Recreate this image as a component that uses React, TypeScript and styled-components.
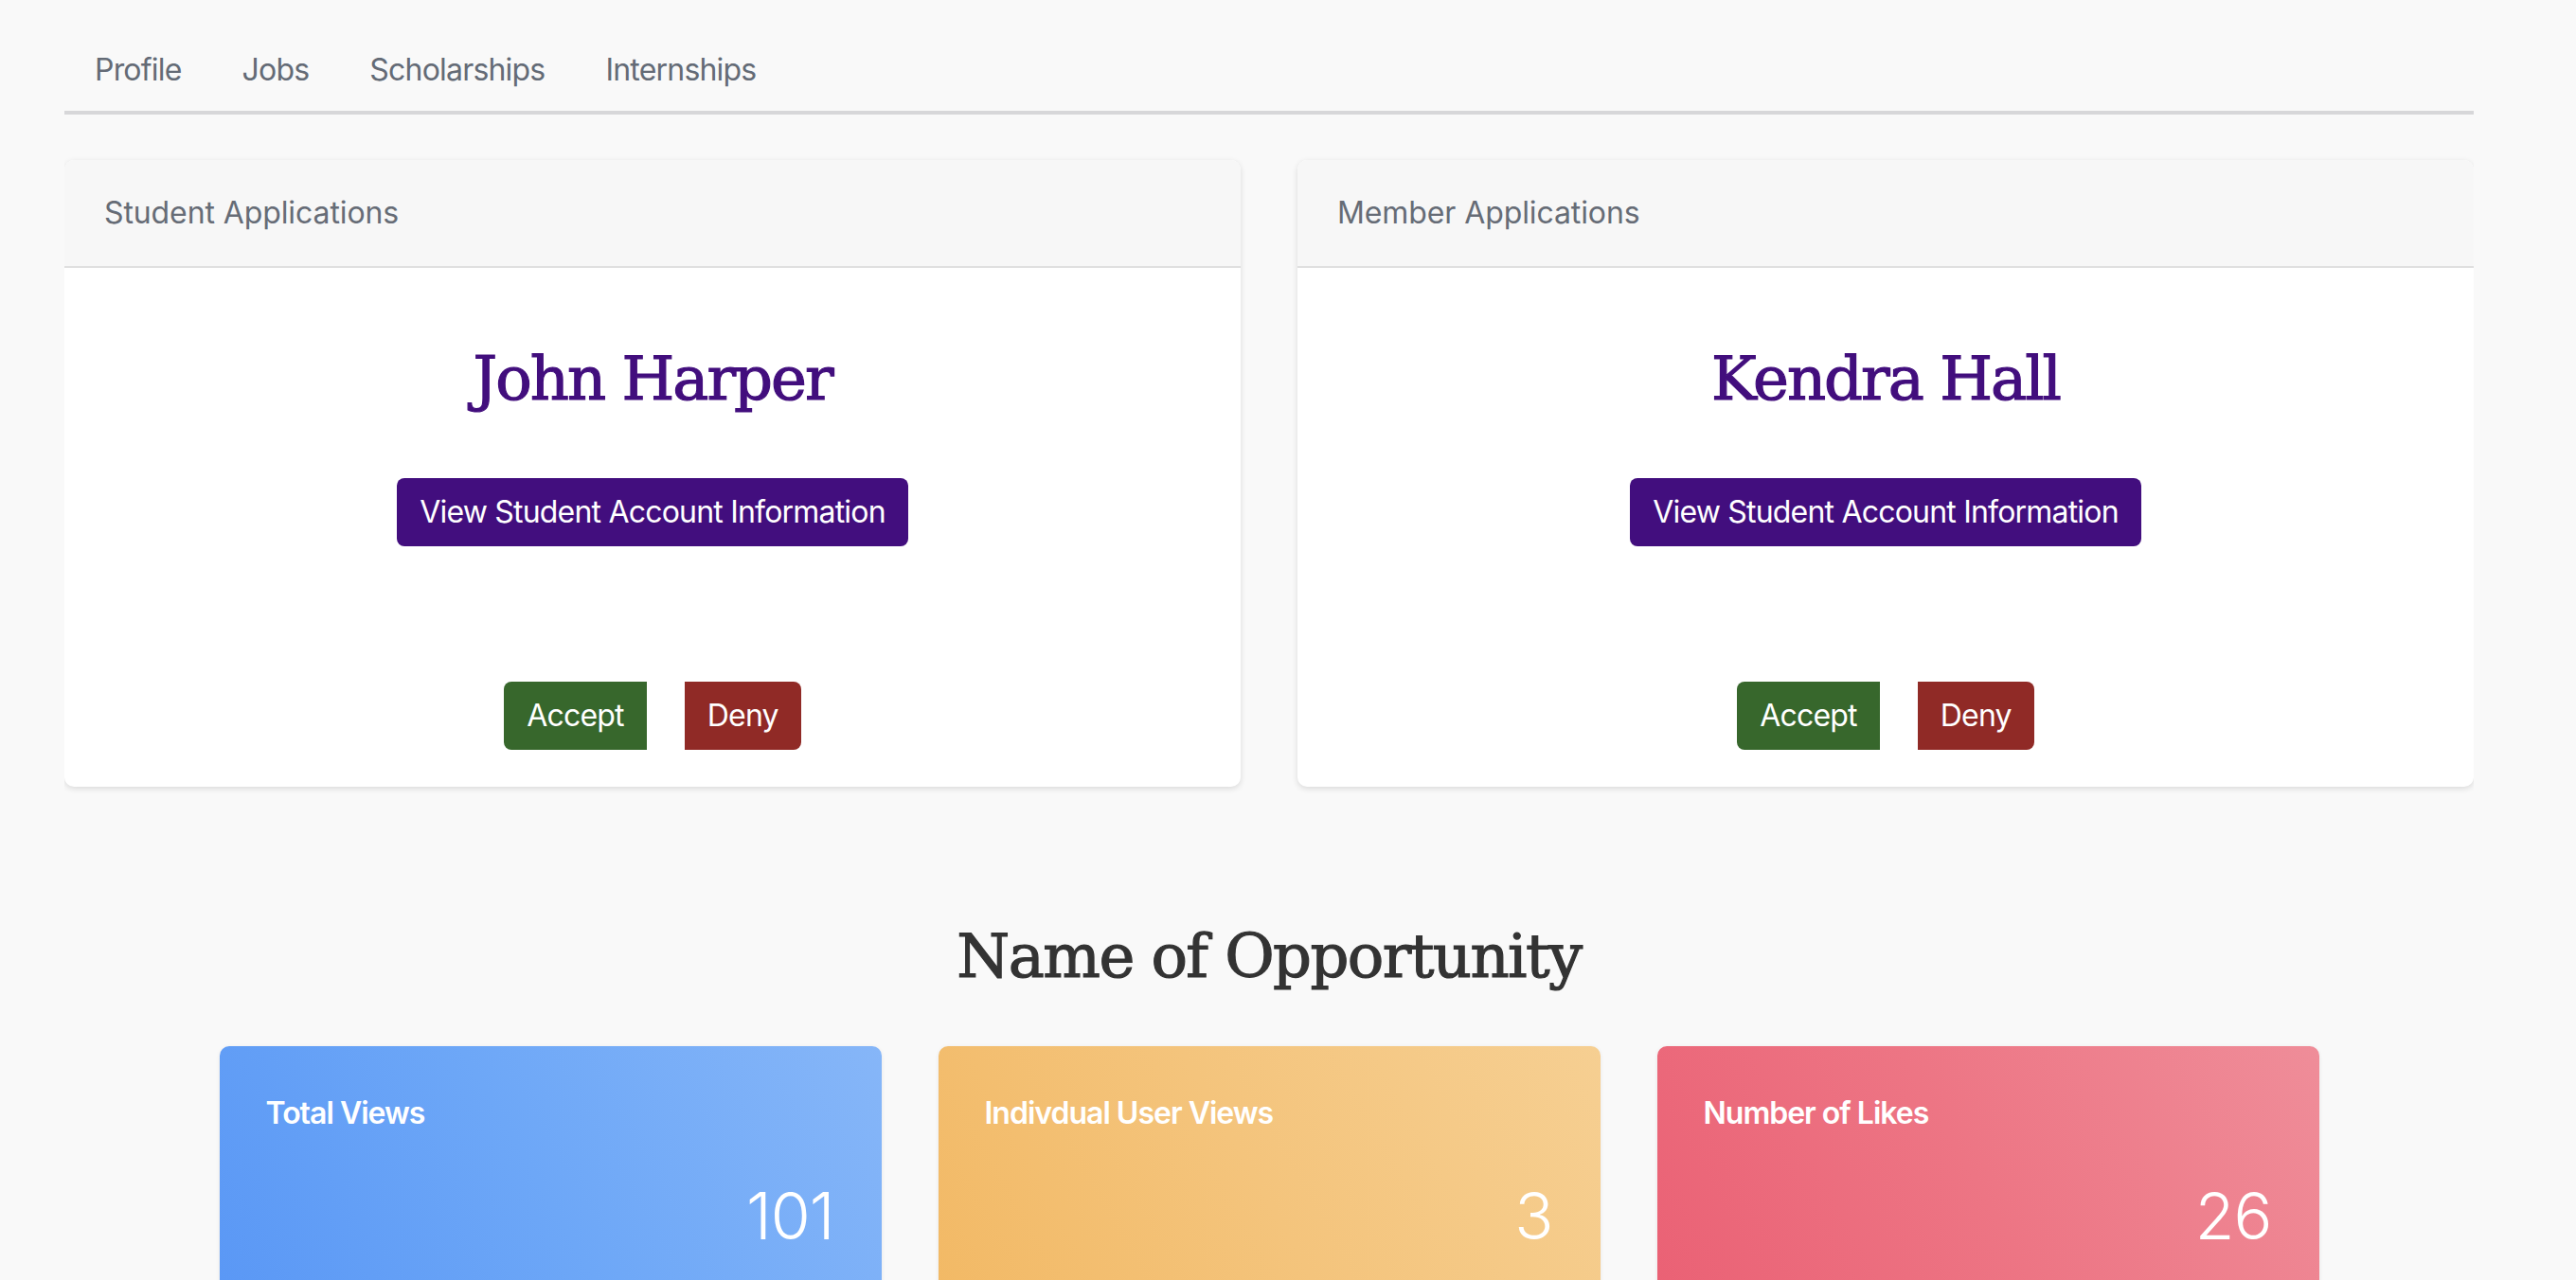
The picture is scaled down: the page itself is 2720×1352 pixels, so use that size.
import React from 'react'
import styled, { createGlobalStyle } from 'styled-components'

const GlobalStyle = createGlobalStyle`
  html, body {
    margin: 0;
    padding: 0;
    background: #f9f9f9;
  }
  body {
    font-family: Inter, "Noto Sans", sans-serif;
    color: #333;
  }
  * {
    box-sizing: border-box;
  }
`

const Page = styled.div`
  width: 2544px;
  margin-left: 68px;
  padding-top: 34px;
  height: 1352px;
  overflow: hidden;
`

const Tabs = styled.nav`
  display: flex;
  border-bottom: 4px solid #d7d7d9;
`

const Tab = styled.a`
  display: block;
  padding: 16px 32px 19px;
  font-size: 32px;
  line-height: 48px;
  letter-spacing: -0.8px;
  color: #646b76;
  text-decoration: none;
  cursor: pointer;
`

const CardRow = styled.div`
  display: grid;
  grid-template-columns: 1fr 1fr;
  gap: 60px;
  margin-top: 48px;
`

const Card = styled.section`
  background: #fff;
  border-radius: 10px;
  box-shadow: 0 2px 6px rgba(0, 0, 0, 0.13);
  overflow: hidden;
`

const CardHeader = styled.header`
  background: #f7f7f7;
  border-bottom: 2px solid #e0e0e0;
  padding: 32px 42px;
  font-size: 32px;
  line-height: 48px;
  letter-spacing: -0.1px;
  color: #666c76;
`

const CardBody = styled.div`
  display: flex;
  flex-direction: column;
  align-items: center;
  padding: 40px 40px 39px;
`

const Name = styled.h2`
  margin: 39px 0 0;
  font-family: "DejaVu Serif", serif;
  font-weight: normal;
  font-size: 64px;
  line-height: 77px;
  letter-spacing: -2px;
  -webkit-text-stroke: 1.2px #420e7d;
  color: #420e7d;
`

const Button = styled.button<{ $tone: 'purple' | 'green' | 'red'; $edge?: 'left' | 'right' }>`
  border: none;
  padding: 12px 24px;
  font-family: Inter, "Noto Sans", sans-serif;
  font-size: 32px;
  line-height: 48px;
  letter-spacing: -0.8px;
  color: #fff;
  cursor: pointer;
  background: ${(p) => (p.$tone === 'purple' ? '#420e7e' : p.$tone === 'green' ? '#37672c' : '#902a26')};
  border-radius: ${(p) => (p.$edge === 'left' ? '8px 0 0 8px' : p.$edge === 'right' ? '0 8px 8px 0' : '8px')};
`

const InfoButton = styled(Button)`
  margin-top: 66px;
`

const Actions = styled.div`
  display: flex;
  gap: 40px;
  margin-top: 143px;
`

const Heading = styled.h1`
  margin: 141px 0 0;
  text-align: center;
  font-family: "DejaVu Serif", serif;
  font-weight: normal;
  font-size: 64px;
  line-height: 77px;
  letter-spacing: -1.6px;
  -webkit-text-stroke: 1.2px #333;
  color: #333;
`

const StatRow = styled.div`
  display: grid;
  grid-template-columns: repeat(3, 699px);
  gap: 60px;
  justify-content: center;
  margin-top: 56px;
`

const gradients = {
  blue: 'linear-gradient(60deg, #5896f5 0%, #6da7f7 50%, #86b6f8 100%)',
  orange: 'linear-gradient(60deg, #f2b863 0%, #f4c47c 50%, #f6cf92 100%)',
  red: 'linear-gradient(60deg, #ea5f73 0%, #ed7584 50%, #ef8d99 100%)',
}

const StatCard = styled.div<{ $color: keyof typeof gradients }>`
  height: 330px;
  border-radius: 10px;
  padding: 47px 50px 0 49px;
  background: ${(p) => gradients[p.$color]};
  box-shadow: 0 1px 4px rgba(0, 0, 0, 0.08);
  color: #fff;
  display: flex;
  flex-direction: column;
`

const StatLabel = styled.div`
  font-size: 32px;
  line-height: 48px;
  font-weight: 600;
  letter-spacing: -1px;
`

const StatValue = styled.div`
  margin-top: 43px;
  text-align: right;
  font-size: 68px;
  line-height: 82px;
  font-weight: 300;
  letter-spacing: -1px;
`

function ApplicationCard({ title, name }: { title: string; name: string }) {
  return (
    <Card>
      <CardHeader>{title}</CardHeader>
      <CardBody>
        <Name>{name}</Name>
        <InfoButton $tone="purple">View Student Account Information</InfoButton>
        <Actions>
          <Button $tone="green" $edge="left">Accept</Button>
          <Button $tone="red" $edge="right">Deny</Button>
        </Actions>
      </CardBody>
    </Card>
  )
}

const stats: { label: string; value: string; color: keyof typeof gradients }[] = [
  { label: 'Total Views', value: '101', color: 'blue' },
  { label: 'Indivdual User Views', value: '3', color: 'orange' },
  { label: 'Number of Likes', value: '26', color: 'red' },
]

export default function App() {
  return (
    <>
      <GlobalStyle />
      <Page>
        <Tabs>
          <Tab>Profile</Tab>
          <Tab>Jobs</Tab>
          <Tab>Scholarships</Tab>
          <Tab>Internships</Tab>
        </Tabs>

        <CardRow>
          <ApplicationCard title="Student Applications" name="John Harper" />
          <ApplicationCard title="Member Applications" name="Kendra Hall" />
        </CardRow>

        <Heading>Name of Opportunity</Heading>

        <StatRow>
          {stats.map((s) => (
            <StatCard key={s.label} $color={s.color}>
              <StatLabel>{s.label}</StatLabel>
              <StatValue>{s.value}</StatValue>
            </StatCard>
          ))}
        </StatRow>
      </Page>
    </>
  )
}
